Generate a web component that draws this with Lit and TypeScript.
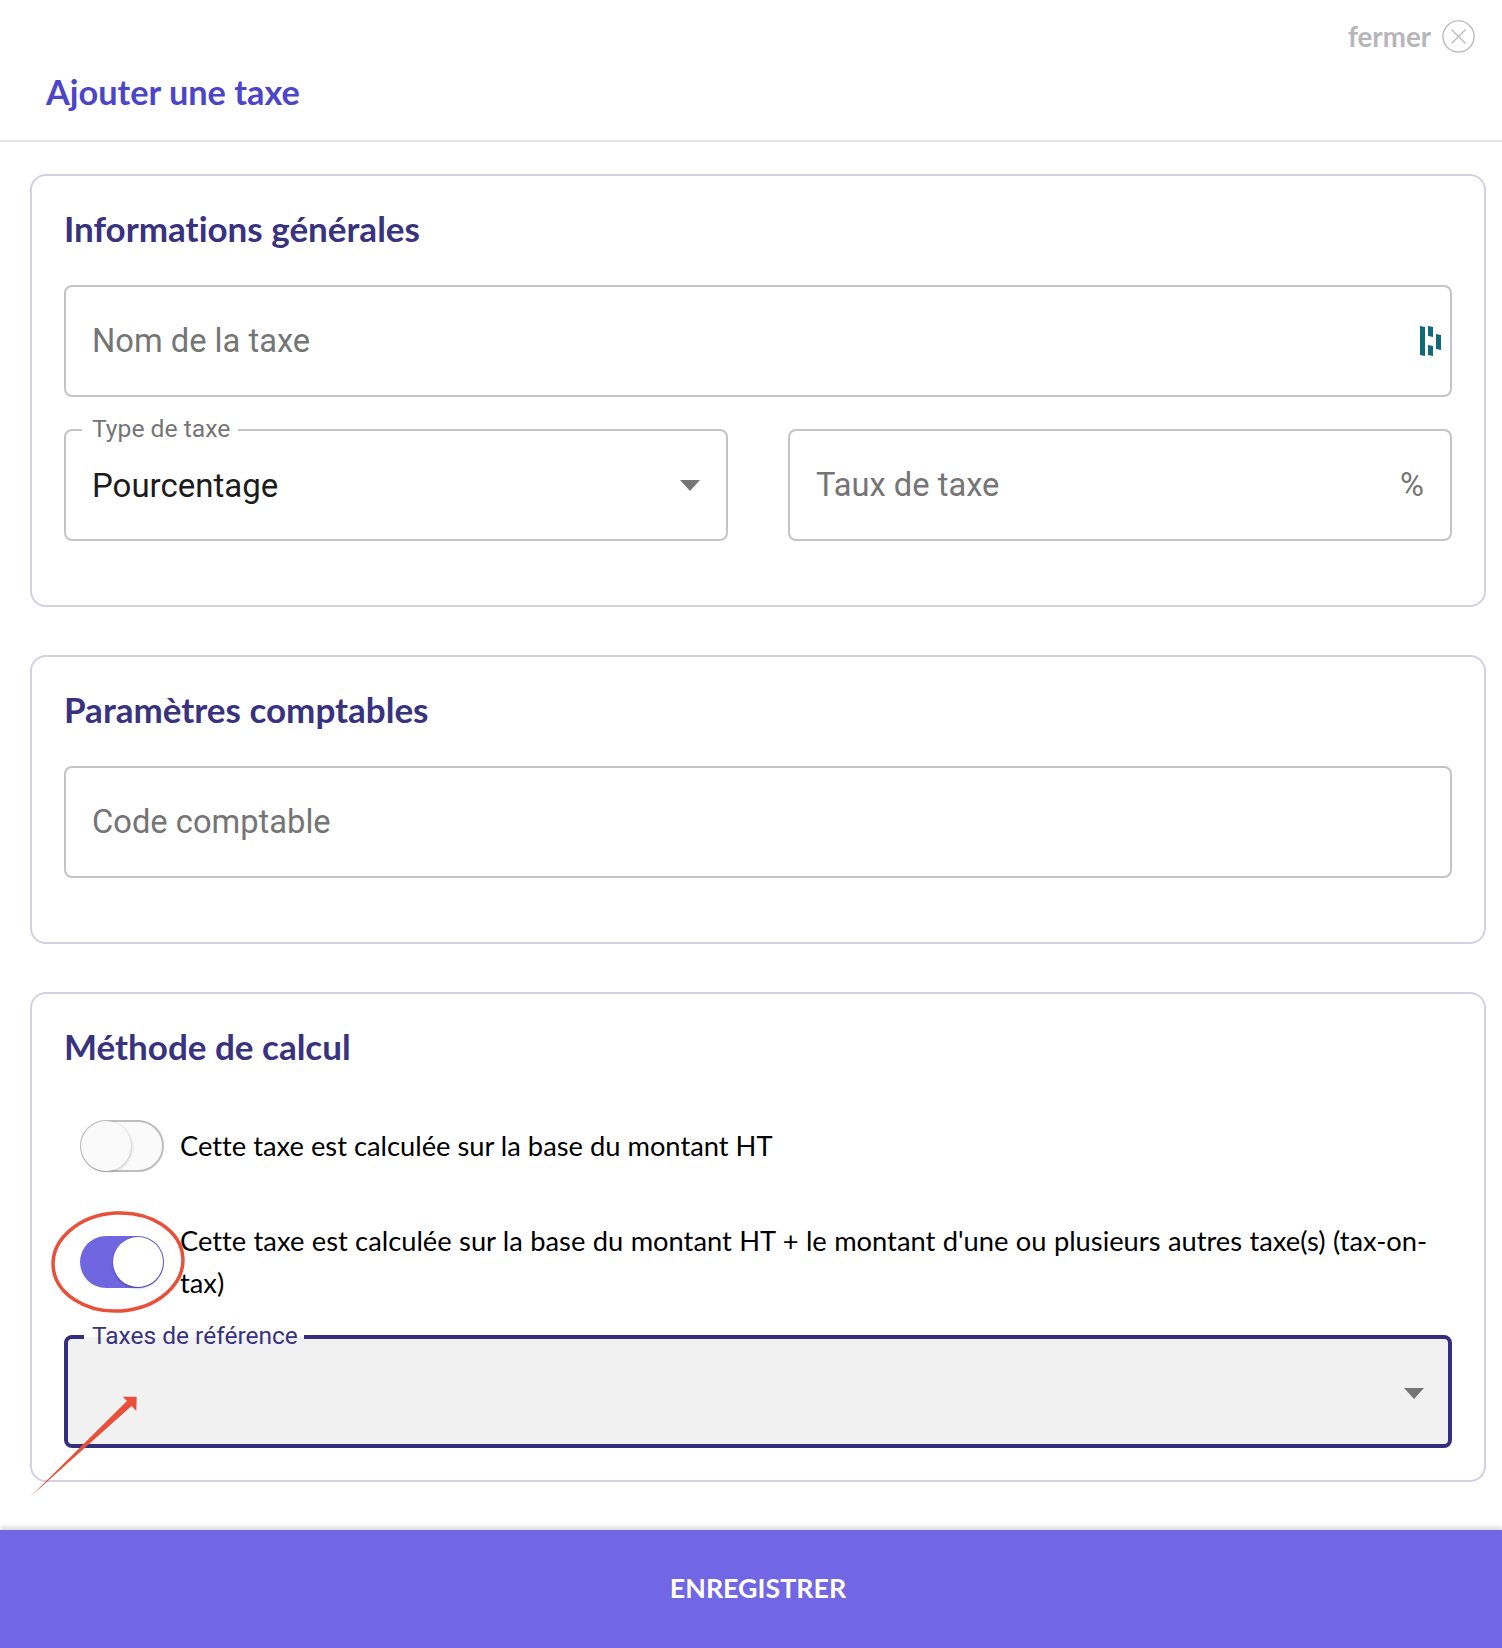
import {css, html, LitElement} from 'lit';
import {customElement} from 'lit/decorators.js';

const caret = html`<svg class="caret" width="20" height="11" viewBox="0 0 20 11"><path d="M0 0h20L10 11z" fill="#757575"></path></svg>`;

@customElement('app-root')
export class AppRoot extends LitElement {
  static styles = css`
    :host {
      display: block;
      position: relative;
      height: 1648px;
      overflow: hidden;
      background: #fff;
      font-family: 'Lato', sans-serif;
      font-variant-ligatures: none;
    }

    .page {
      display: flex;
      flex-direction: column;
      height: 100%;
    }

    .header {
      height: 140px;
      border-bottom: 2px solid #e0e1e6;
      display: flex;
      flex-direction: column;
      flex-shrink: 0;
    }

    .close {
      display: flex;
      justify-content: flex-end;
      align-items: center;
      gap: 11px;
      padding: 20px 27px 0 0;
      height: 33px;
      color: #b6b6b9;
      font-size: 27.7px;
      line-height: 31px;
      font-weight: 700;
    }

    .title {
      margin: 16px 0 0 46px;
      color: #4c45c9;
      font-size: 34.3px;
      line-height: 46px;
      font-weight: 700;
    }

    .body {
      flex: 1;
      display: flex;
      flex-direction: column;
      gap: 48px;
      padding: 32px 16px 0 30px;
    }

    .card {
      border: 2px solid #d1d0e5;
      border-radius: 16px;
      padding: 0 32px 64px;
    }

    .card.last {
      padding-bottom: 32px;
    }

    h2 {
      margin: 0;
      padding: 27px 0 32px;
      height: 50px;
      box-sizing: content-box;
      line-height: 50px;
      color: #38327f;
      font-size: 35px;
      font-weight: 700;
    }

    .field {
      position: relative;
      box-sizing: border-box;
      height: 112px;
      border: 2px solid #c4c4c4;
      border-radius: 8px;
      display: flex;
      align-items: center;
      justify-content: space-between;
      padding: 0 26px;
      font-family: 'Roboto', sans-serif;
      font-size: 32.7px;
      color: #757575;
    }

    .field.logo {
      padding-right: 8px;
    }

    .row {
      display: grid;
      grid-template-columns: 1fr 1fr;
      gap: 60px;
      margin-top: 32px;
    }

    .value {
      color: #1c1c1c;
      font-size: 33px;
    }

    .legend {
      position: absolute;
      left: 16px;
      top: -17px;
      padding: 0 8px 0 10px;
      background: #fff;
      font-size: 24.7px;
      line-height: 30px;
      color: #757575;
    }

    .field.focused {
      height: 113px;
      border: 4px solid #352e7e;
      background: #f1f1f1;
      padding: 0 24px;
      justify-content: flex-end;
    }

    .field.focused .legend {
      left: 16px;
      top: -18px;
      padding: 0 6px 0 8px;
      font-size: 24.5px;
      color: #38327f;
      background: linear-gradient(#fff 55%, #f1f1f1 55%);
    }

    .field.focused .caret {
      margin-top: 3px;
    }

    .toggle-row {
      display: flex;
      gap: 16px;
      padding-left: 16px;
      font-size: 27.3px;
      line-height: 42px;
      color: #000;
    }

    .toggle-row.off {
      align-items: center;
      margin-top: 17px;
      margin-bottom: 48px;
    }

    .toggle-row.on {
      margin-bottom: 31px;
      word-spacing: 0.4px;
    }

    .toggle {
      position: relative;
      flex-shrink: 0;
      box-sizing: border-box;
      width: 84px;
      height: 52px;
      border-radius: 26px;
      border: 2px solid #bdbdbd;
      background: #fafafa;
    }

    .knob {
      position: absolute;
      box-sizing: border-box;
      top: -1px;
      left: -1px;
      width: 50px;
      height: 50px;
      border-radius: 50%;
      background: #fafafa;
      box-shadow: 1px 1px 3px rgba(0, 0, 0, 0.18);
    }

    .toggle.checked {
      border: 0;
      background: #6f66e0;
      margin-top: 16px;
    }

    .toggle.checked .knob {
      left: 33px;
      top: 1px;
      background: #fff;
      box-shadow: 0 1px 2px rgba(40, 30, 120, 0.6);
    }

    .footer {
      flex-shrink: 0;
      box-sizing: border-box;
      height: 118px;
      background: #7166e4;
      box-shadow: 0 -2px 6px rgba(0, 0, 0, 0.2);
      display: flex;
      align-items: center;
      justify-content: center;
      padding: 0 0 2px 14px;
      color: #fff;
      font-size: 26.8px;
      font-weight: 700;
    }

    .marks {
      position: absolute;
      inset: 0;
      pointer-events: none;
    }
  `;

  render() {
    return html`
      <div class="page">
        <header class="header">
          <div class="close">
            <span>fermer</span>
            <svg width="33" height="33" viewBox="0 0 33 33" fill="none" stroke="#bcbcbe" stroke-width="1.4">
              <circle cx="16.5" cy="16.5" r="15.6"></circle>
              <path d="M9.5 9.5l14 14M23.5 9.5l-14 14"></path>
            </svg>
          </div>
          <div class="title">Ajouter une taxe</div>
        </header>

        <main class="body">
          <section class="card">
            <h2>Informations générales</h2>
            <div class="field logo">
              <span>Nom de la taxe</span>
              <svg width="22" height="30" viewBox="0 0 22 30" fill="#0f6a7a">
                <path d="M0 0l5 1v29l-5-1zM8 0l5 1v10l-5-1zM8 19l5 1v10l-5-1zM16 8l5 1v15l-5-1z"></path>
              </svg>
            </div>
            <div class="row">
              <div class="field">
                <span class="legend">Type de taxe</span>
                <span class="value">Pourcentage</span>
                ${caret}
              </div>
              <div class="field">
                <span>Taux de taxe</span>
                <span>%</span>
              </div>
            </div>
          </section>

          <section class="card">
            <h2>Paramètres comptables</h2>
            <div class="field"><span>Code comptable</span></div>
          </section>

          <section class="card last">
            <h2>Méthode de calcul</h2>
            <div class="toggle-row off">
              <div class="toggle"><div class="knob"></div></div>
              <span>Cette taxe est calculée sur la base du montant HT</span>
            </div>
            <div class="toggle-row on">
              <div class="toggle checked"><div class="knob"></div></div>
              <span>Cette taxe est calculée sur la base du montant HT + le montant d'une ou plusieurs autres taxe(s) (tax-on-tax)</span>
            </div>
            <div class="field focused">
              <span class="legend">Taxes de référence</span>
              ${caret}
            </div>
          </section>
        </main>

        <footer class="footer">ENREGISTRER</footer>
      </div>

      <svg class="marks" width="1502" height="1648" viewBox="0 0 1502 1648">
        <ellipse cx="118" cy="1262" rx="65" ry="49" fill="none" stroke="#e8503a" stroke-width="3.5" transform="rotate(-4 118 1262)"></ellipse>
        <path d="M30 1497L127 1401l-4.300-4.300h14l-.4 14.300-4.800-5z" fill="#e8503a"></path>
      </svg>
    `;
  }
}

declare global {
  interface HTMLElementTagNameMap {
    'app-root': AppRoot;
  }
}
